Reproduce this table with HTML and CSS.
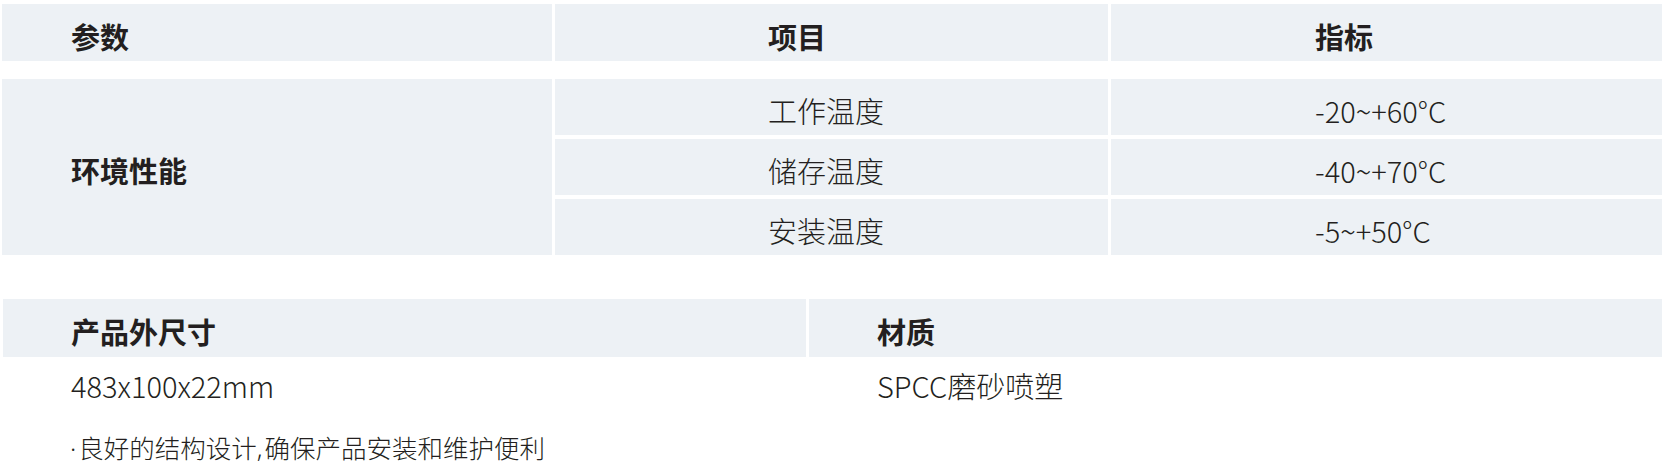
FILE: index.html
```html
<!DOCTYPE html>
<html lang="zh-CN">
<head>
<meta charset="utf-8">
<title>参数</title>
<link rel="stylesheet" href="styles.css">
</head>
<body>
<div class="page">
  <div class="spec">
    <div class="spec-head">
      <div class="cell c1 bold">参数</div>
      <div class="cell c2 bold">项目</div>
      <div class="cell c3 bold">指标</div>
    </div>
    <div class="spec-body">
      <div class="cell c1 group bold">环境性能</div>
      <div class="cell c2">工作温度</div>
      <div class="cell c3">-20~+60°C</div>
      <div class="cell c2">储存温度</div>
      <div class="cell c3">-40~+70°C</div>
      <div class="cell c2">安装温度</div>
      <div class="cell c3">-5~+50°C</div>
    </div>
  </div>

  <div class="info">
    <div class="info-head">
      <div class="icell bold">产品外尺寸</div>
      <div class="icell bold">材质</div>
    </div>
    <div class="info-row">
      <div class="icell">483x100x22mm</div>
      <div class="icell">SPCC磨砂喷塑</div>
    </div>
  </div>
  <p class="note"><span class="punct">·</span>良好的结构设计<span class="punct">,</span>确保产品安装和维护便利</p>
</div>
</body>
</html>
```

FILE: styles.css
```css
* { box-sizing: border-box; }
html, body { margin: 0; padding: 0; background: #ffffff; }
body {
  font-family: "Noto Sans CJK SC", "Noto Sans", sans-serif;
  color: #231f20;
  font-weight: 300;
}
.page {
  width: 1663px;
  padding: 4px 1px 0 2px;
}
.bold { font-weight: 700; }

.spec-head, .spec-body {
  display: grid;
  grid-template-columns: 550px 553px 1fr;
  column-gap: 3px;
}
.spec-head { height: 57px; }
.spec-body {
  margin-top: 18px;
  grid-template-rows: 56px 56px 56px;
  row-gap: 4px;
}
.cell {
  background: #edf1f5;
  display: flex;
  align-items: center;
  font-size: 29px;
  line-height: 1;
  padding-top: 7px;
}
.group { grid-row: 1 / span 3; }
.c1 { padding-left: 69px; }
.c2 { padding-left: 213px; }
.c3 { padding-left: 204px; }

.info { margin-top: 44px; }
.info-head, .info-row {
  display: grid;
  grid-template-columns: 803px 1fr;
  column-gap: 3px;
  margin-left: 1px;
}
.info-head { height: 58px; }
.info-head .icell { background: #edf1f5; padding-top: 6px; padding-bottom: 0; }
.info-row { height: 60px; }
.icell {
  display: flex;
  align-items: center;
  padding-left: 68px;
  padding-bottom: 4px;
  font-size: 29px;
  line-height: 1;
}
.note {
  margin: 17px 0 0 68px;
  font-size: 25.5px;
  line-height: 1;
}
.punct {
  font-family: "Noto Sans", "DejaVu Sans", sans-serif;
  margin-right: 2px;
}
```
